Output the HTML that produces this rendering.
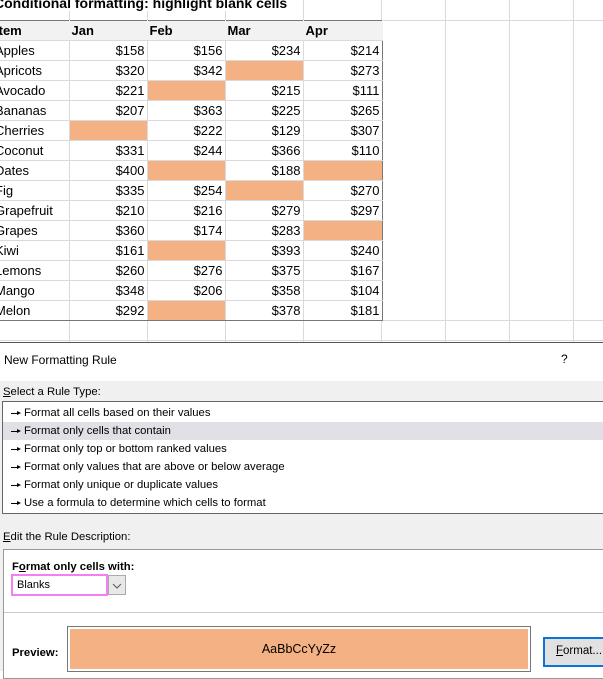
<!DOCTYPE html>
<html><head><meta charset="utf-8"><style>
*{margin:0;padding:0;box-sizing:border-box}
body{width:603px;height:671px;overflow:hidden;background:#fff;font-family:"Liberation Sans",sans-serif;position:relative;color:#000}
.grid{position:absolute;left:0;top:0;width:603px;height:342px;
background-image:linear-gradient(#dadada,#dadada),linear-gradient(#dadada,#dadada),linear-gradient(#dadada,#dadada),linear-gradient(#dadada,#dadada),linear-gradient(#dadada,#dadada),linear-gradient(#dadada,#dadada),linear-gradient(#dadada,#dadada),linear-gradient(#dadada,#dadada);
background-size:1px 342px;background-repeat:no-repeat;
background-position:69px 0,147px 0,225px 0,303px 0,381px 0,445px 0,509px 0,573px 0}
.hl{position:absolute;left:0;width:603px;height:1px;background:#dadada}
.title{position:absolute;left:-6px;top:-5px;font-weight:bold;font-size:14px;white-space:nowrap;background:#fff;padding-right:4px}
table{position:absolute;left:0;top:20px;border-collapse:collapse;table-layout:fixed;font-size:13px}
td{height:20px;border:1px solid #dadada;padding:0 2px;white-space:nowrap;overflow:hidden;text-align:right;background:#fff}
td:first-child{text-align:left;text-indent:-5px;padding:0;border-left:none}
tr.h td{background:#f2f2f2;text-align:left;font-weight:bold;border-top:1px solid #777;border-left-color:#f2f2f2;border-right-color:#f2f2f2}
td.o{background:#f4b183}
td:last-child{border-right:1px solid #777}
tr:last-child td{border-bottom:1px solid #777}
.dlg{position:absolute;left:0;top:342px;width:603px;height:329px;background:#f0f0f0;border-top:1px solid #555;font-size:11.3px}
.tbar{position:absolute;left:0;top:0;width:603px;height:38px;background:#fff}
.abs{position:absolute;white-space:nowrap}
.list{position:absolute;left:2px;top:58px;width:605px;height:113px;background:#fff;border:1px solid #666;border-right:none}
.it{height:18px;line-height:18px;padding-left:8px;font-size:11.3px}
.it.s{background:#e0e0e6}
.ar{display:inline-block;width:10px;height:7px;position:relative;margin-right:3px;vertical-align:middle}
.ar:before{content:"";position:absolute;left:0;top:3px;width:8px;height:1px;background:#000}
.ar:after{content:"";position:absolute;left:6px;top:1px;border-left:4px solid #000;border-top:2.5px solid transparent;border-bottom:2.5px solid transparent}
.box{position:absolute;left:3px;top:206px;width:604px;height:130px;background:#fff;border:1px solid #999;border-right:none}
</style></head><body>
<div class="grid"></div>
<div class="hl" style="top:20px"></div>
<div class="hl" style="top:320px"></div>
<div class="hl" style="top:340px"></div>
<div class="title">Conditional formatting: highlight blank cells</div>
<table>
<colgroup><col style="width:69px"><col style="width:78px"><col style="width:78px"><col style="width:78px"><col style="width:79px"></colgroup>
<tr class="h"><td>Item</td><td>Jan</td><td>Feb</td><td>Mar</td><td>Apr</td></tr>
<tr><td>Apples</td><td>$158</td><td>$156</td><td>$234</td><td>$214</td></tr>
<tr><td>Apricots</td><td>$320</td><td>$342</td><td class="o"></td><td>$273</td></tr>
<tr><td>Avocado</td><td>$221</td><td class="o"></td><td>$215</td><td>$111</td></tr>
<tr><td>Bananas</td><td>$207</td><td>$363</td><td>$225</td><td>$265</td></tr>
<tr><td>Cherries</td><td class="o"></td><td>$222</td><td>$129</td><td>$307</td></tr>
<tr><td>Coconut</td><td>$331</td><td>$244</td><td>$366</td><td>$110</td></tr>
<tr><td>Dates</td><td>$400</td><td class="o"></td><td>$188</td><td class="o"></td></tr>
<tr><td>Fig</td><td>$335</td><td>$254</td><td class="o"></td><td>$270</td></tr>
<tr><td>Grapefruit</td><td>$210</td><td>$216</td><td>$279</td><td>$297</td></tr>
<tr><td>Grapes</td><td>$360</td><td>$174</td><td>$283</td><td class="o"></td></tr>
<tr><td>Kiwi</td><td>$161</td><td class="o"></td><td>$393</td><td>$240</td></tr>
<tr><td>Lemons</td><td>$260</td><td>$276</td><td>$375</td><td>$167</td></tr>
<tr><td>Mango</td><td>$348</td><td>$206</td><td>$358</td><td>$104</td></tr>
<tr><td>Melon</td><td>$292</td><td class="o"></td><td>$378</td><td>$181</td></tr>
</table>
<div class="dlg">
<div class="tbar"><div class="abs" style="left:4px;top:10px;font-size:12px">New Formatting Rule</div><div class="abs" style="left:561px;top:9px;font-size:12px">?</div></div>
<div class="abs" style="left:3px;top:43px"><u>S</u>elect a Rule Type:</div>
<div class="list">
<div class="it" style="margin-top:2px"><span class="ar"></span>Format all cells based on their values</div>
<div class="it s"><span class="ar"></span>Format only cells that contain</div>
<div class="it"><span class="ar"></span>Format only top or bottom ranked values</div>
<div class="it"><span class="ar"></span>Format only values that are above or below average</div>
<div class="it"><span class="ar"></span>Format only unique or duplicate values</div>
<div class="it"><span class="ar"></span>Use a formula to determine which cells to format</div>
</div>
<div class="abs" style="left:3px;top:188px"><u>E</u>dit the Rule Description:</div>
<div class="box">
<div class="abs" style="left:8px;top:11px;font-weight:bold">F<u>o</u>rmat only cells with:</div>
<div class="abs" style="left:7px;top:24px;width:97px;height:22px;border:2px solid #f47ef4;padding:3px 4px;font-size:11px">Blanks</div>
<div class="abs" style="left:104px;top:25px;width:18px;height:20px;border:1px solid #aaa;background:#e8e8e8"><svg width="16" height="18" viewBox="0 0 16 18"><path d="M4 8l4 4 4-4" fill="none" stroke="#555" stroke-width="1"/></svg></div>
<div class="hl" style="top:62px;left:0;background:#ccc"></div>
<div class="abs" style="left:8px;top:97px;font-weight:bold">Preview:</div>
<div class="abs" style="left:63px;top:76px;width:464px;height:46px;border:1px solid #777;background:#fff;padding:2px">
<div style="background:#f4b183;height:40px;line-height:40px;text-align:center;font-size:12.5px">AaBbCcYyZz</div></div>
<div class="abs" style="left:539px;top:87px;width:70px;height:30px;border:2px solid #0a74d9;background:#e1e1e1;padding:6px 0 0 11px;font-size:11.5px"><u>F</u>ormat...</div>
</div>
</div>
</body></html>
